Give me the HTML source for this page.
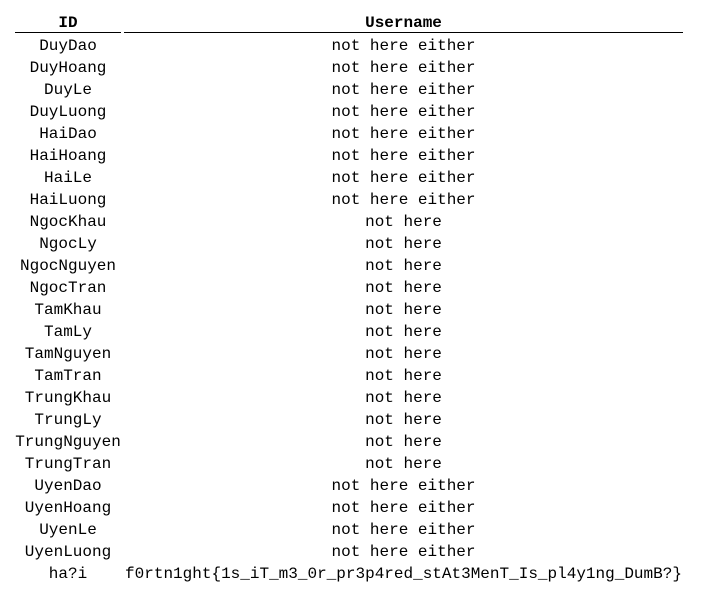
<!DOCTYPE html>
<html><head><style>
html,body{margin:0;padding:0;background:#fff;width:710px;height:605px;overflow:hidden}
body{font-family:"Liberation Mono","Courier New",monospace;font-size:16px;color:#000;position:relative}
.r{position:absolute;left:0;width:710px;height:22px;line-height:22px}
.a{position:absolute;left:14px;width:108px;text-align:center;white-space:pre}
.b{position:absolute;left:124px;width:559px;text-align:center;white-space:pre}
.h{font-weight:bold}
.l1{position:absolute;top:32px;left:15px;width:106px;height:1px;background:#000}
.l2{position:absolute;top:32px;left:124px;width:559px;height:1px;background:#000}
</style></head><body>
<div class="r h" style="top:12px"><div class="a">ID</div><div class="b">Username</div></div>
<div class="l1"></div><div class="l2"></div>
<div class="r" style="top:35px"><div class="a">DuyDao</div><div class="b">not here either</div></div>
<div class="r" style="top:57px"><div class="a">DuyHoang</div><div class="b">not here either</div></div>
<div class="r" style="top:79px"><div class="a">DuyLe</div><div class="b">not here either</div></div>
<div class="r" style="top:101px"><div class="a">DuyLuong</div><div class="b">not here either</div></div>
<div class="r" style="top:123px"><div class="a">HaiDao</div><div class="b">not here either</div></div>
<div class="r" style="top:145px"><div class="a">HaiHoang</div><div class="b">not here either</div></div>
<div class="r" style="top:167px"><div class="a">HaiLe</div><div class="b">not here either</div></div>
<div class="r" style="top:189px"><div class="a">HaiLuong</div><div class="b">not here either</div></div>
<div class="r" style="top:211px"><div class="a">NgocKhau</div><div class="b">not here</div></div>
<div class="r" style="top:233px"><div class="a">NgocLy</div><div class="b">not here</div></div>
<div class="r" style="top:255px"><div class="a">NgocNguyen</div><div class="b">not here</div></div>
<div class="r" style="top:277px"><div class="a">NgocTran</div><div class="b">not here</div></div>
<div class="r" style="top:299px"><div class="a">TamKhau</div><div class="b">not here</div></div>
<div class="r" style="top:321px"><div class="a">TamLy</div><div class="b">not here</div></div>
<div class="r" style="top:343px"><div class="a">TamNguyen</div><div class="b">not here</div></div>
<div class="r" style="top:365px"><div class="a">TamTran</div><div class="b">not here</div></div>
<div class="r" style="top:387px"><div class="a">TrungKhau</div><div class="b">not here</div></div>
<div class="r" style="top:409px"><div class="a">TrungLy</div><div class="b">not here</div></div>
<div class="r" style="top:431px"><div class="a">TrungNguyen</div><div class="b">not here</div></div>
<div class="r" style="top:453px"><div class="a">TrungTran</div><div class="b">not here</div></div>
<div class="r" style="top:475px"><div class="a">UyenDao</div><div class="b">not here either</div></div>
<div class="r" style="top:497px"><div class="a">UyenHoang</div><div class="b">not here either</div></div>
<div class="r" style="top:519px"><div class="a">UyenLe</div><div class="b">not here either</div></div>
<div class="r" style="top:541px"><div class="a">UyenLuong</div><div class="b">not here either</div></div>
<div class="r" style="top:563px"><div class="a">ha?i</div><div class="b">f0rtn1ght{1s_iT_m3_0r_pr3p4red_stAt3MenT_Is_pl4y1ng_DumB?}</div></div>
</body></html>
